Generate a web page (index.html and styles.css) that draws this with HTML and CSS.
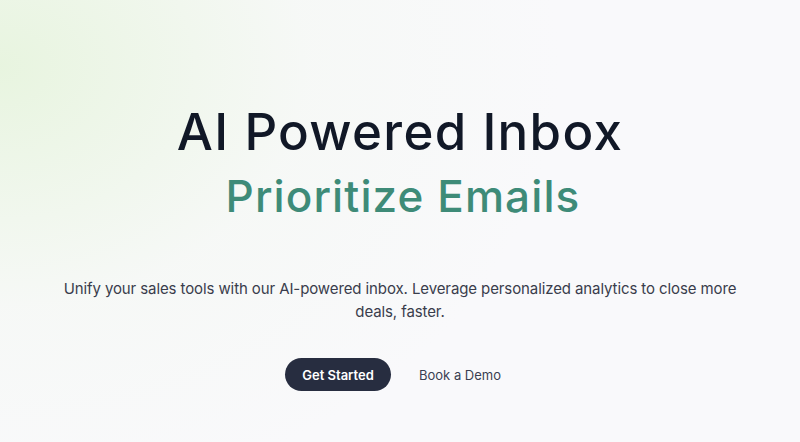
FILE: index.html
```html
<!DOCTYPE html>
<html lang="en">
<head>
<meta charset="utf-8">
<title>AI Powered Inbox</title>
<link rel="stylesheet" href="styles.css">
</head>
<body>
<main class="hero">
  <h1 class="hero-title">
    <span class="title-main">AI Powered Inbox</span>
    <span class="title-accent">Prioritize Emails</span>
  </h1>
  <p class="hero-text">Unify your sales tools with our AI-powered inbox. Leverage personalized analytics to close more<br>deals, faster.</p>
  <div class="hero-actions">
    <a class="btn-primary" href="#">Get Started</a>
    <a class="btn-link" href="#">Book a Demo</a>
  </div>
</main>
</body>
</html>
```
FILE: styles.css
```css
* { box-sizing: border-box; }
html, body {
  margin: 0;
  height: 100%;
}
body {
  font-family: "Inter", "Noto Sans", sans-serif;
  background:
    radial-gradient(ellipse 560px 440px at 0% 15%, rgba(226, 243, 214, 0.75), rgba(240, 247, 236, 0.3) 55%, rgba(250, 250, 251, 0) 100%),
    #f9f9fb;
  overflow: hidden;
}
.hero {
  display: flex;
  flex-direction: column;
  align-items: center;
  padding-top: 100px;
  text-align: center;
}
.hero-title {
  margin: 0;
  display: flex;
  flex-direction: column;
  align-items: center;
  font-weight: 500;
}
.title-main {
  font-size: 51px;
  line-height: 64px;
  color: #111827;
  letter-spacing: 1.3px;
}
.title-accent {
  font-size: 44px;
  line-height: 64px;
  color: #3e8b78;
  letter-spacing: 1.1px;
  padding-left: 6px;
}
.hero-text {
  margin: 49px 0 0;
  font-size: 15px;
  line-height: 23px;
  letter-spacing: -0.1px;
  color: #3a3d4c;
}
.hero-actions {
  margin-top: 35px;
  display: flex;
  align-items: center;
  gap: 14px;
}
.btn-primary {
  display: inline-flex;
  align-items: center;
  justify-content: center;
  height: 33px;
  width: 106px;
  border-radius: 999px;
  background: #272d40;
  color: #fff;
  font-size: 13px;
  font-weight: 600;
  text-decoration: none;
}
.btn-link {
  padding: 0 14px;
  color: #3a3f52;
  font-size: 13px;
  text-decoration: none;
}
```
